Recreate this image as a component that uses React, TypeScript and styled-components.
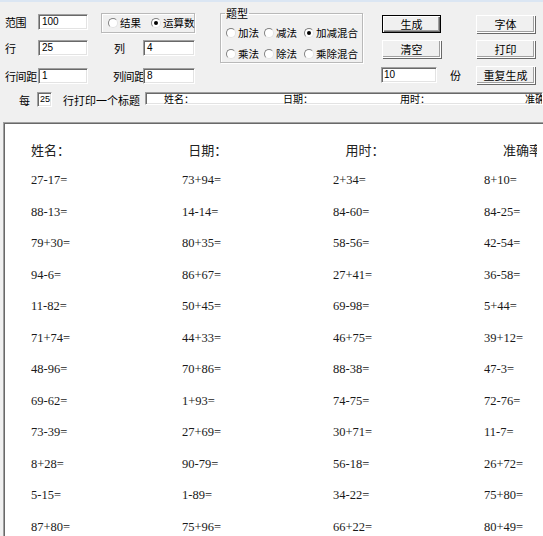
import React from 'react';
import styled, { createGlobalStyle } from 'styled-components';

const CJK = `"Noto Sans CJK SC", "Liberation Sans", sans-serif`;

const GlobalStyle = createGlobalStyle`
  html, body {
    margin: 0;
    padding: 0;
    background: #f0f0f0;
    overflow: hidden;
  }
  * {
    box-sizing: border-box;
  }
`;

const rows: string[][] = [
  ['27-17=', '73+94=', '2+34=', '8+10='],
  ['88-13=', '14-14=', '84-60=', '84-25='],
  ['79+30=', '80+35=', '58-56=', '42-54='],
  ['94-6=', '86+67=', '27+41=', '36-58='],
  ['11-82=', '50+45=', '69-98=', '5+44='],
  ['71+74=', '44+33=', '46+75=', '39+12='],
  ['48-96=', '70+86=', '88-38=', '47-3='],
  ['69-62=', '1+93=', '74-75=', '72-76='],
  ['73-39=', '27+69=', '30+71=', '11-7='],
  ['8+28=', '90-79=', '56-18=', '26+72='],
  ['5-15=', '1-89=', '34-22=', '75+80='],
  ['87+80=', '75+96=', '66+22=', '80+49='],
];

const headers = ['姓名：', '日期：', '用时：', '准确率'];

const Radio: React.FC<{ label: string; checked?: boolean; width?: number }> = ({ label, checked, width }) => (
  <RadioItem $width={width}>
    <RadioCircle $checked={checked} />
    <RadioLabel>{label}</RadioLabel>
  </RadioItem>
);

export default function App() {
  return (
    <Page>
      <GlobalStyle />
      <TopStripe />
      <Toolbar>
        <FieldGrid>
          <FieldLabel $col={1} $row={1}>范围</FieldLabel>
          <TextBox $col={2} $row={1} $offset={1}>100</TextBox>
          <ModeBox>
            <Radio label="结果" width={43} />
            <Radio label="运算数" checked />
          </ModeBox>

          <FieldLabel $col={1} $row={2}>行</FieldLabel>
          <TextBox $col={2} $row={2}>25</TextBox>
          <FieldLabel $col={5} $row={2} $indent={2}>列</FieldLabel>
          <TextBox $col={6} $row={2}>4</TextBox>

          <FieldLabel $col={1} $row={3}>行间距</FieldLabel>
          <TextBox $col={2} $row={3}>1</TextBox>
          <FieldLabel $col={5} $row={3}>列间距</FieldLabel>
          <TextBox $col={6} $row={3}>8</TextBox>
        </FieldGrid>

        <TypeGroup>
          <GroupLegend>题型</GroupLegend>
          <RadioRow>
            <Radio label="加法" />
            <Radio label="减法" />
            <Radio label="加减混合" checked />
          </RadioRow>
          <RadioRow>
            <Radio label="乘法" />
            <Radio label="除法" />
            <Radio label="乘除混合" />
          </RadioRow>
        </TypeGroup>

        <ButtonColumn $width={88} $left={19}>
          <Button $default>生成</Button>
          <Button>清空</Button>
          <CopiesRow>
            <CopiesBox>10</CopiesBox>
            <PlainLabel>份</PlainLabel>
          </CopiesRow>
        </ButtonColumn>

        <ButtonColumn $width={59} $left={6}>
          <Button>字体</Button>
          <Button>打印</Button>
          <Button $lastGap>重复生成</Button>
        </ButtonColumn>
      </Toolbar>

      <TitleRow>
        <PlainLabel>每</PlainLabel>
        <SmallBox>25</SmallBox>
        <PlainLabel $left={11}>行打印一个标题</PlainLabel>
        <TitleBar>
          <span>姓名：</span>
          <span>日期：</span>
          <span>用时：</span>
          <span>准确率：</span>
        </TitleBar>
      </TitleRow>

      <Sheet>
        <SheetClip>
          <HeaderRow>
            {headers.map((h) => (
              <HeaderCell key={h}>{h}</HeaderCell>
            ))}
          </HeaderRow>
          <QuestionGrid>
            {rows.map((r, i) =>
              r.map((q, j) => <QuestionCell key={`${i}-${j}`}>{q}</QuestionCell>)
            )}
          </QuestionGrid>
        </SheetClip>
      </Sheet>
    </Page>
  );
}

const Page = styled.div`
  width: 543px;
  height: 536px;
  overflow: hidden;
  background: #f0f0f0;
  font-family: ${CJK};
  color: #000;
`;

const TopStripe = styled.div`
  height: 2px;
  background: #dbe6f3;
`;

const Toolbar = styled.div`
  display: flex;
  align-items: flex-start;
  height: 90px;
  padding: 11px 0 0 4px;
`;

const FieldGrid = styled.div`
  display: grid;
  grid-template-columns: 34px 50px 13px 11px 31px 52px;
  grid-template-rows: 27px 28px 16px;
  align-items: start;
`;

const FieldLabel = styled.div<{ $col: number; $row: number; $indent?: number }>`
  grid-column: ${(p) => p.$col};
  grid-row: ${(p) => p.$row};
  margin-top: ${(p) => (p.$row === 1 ? 1 : 0)}px;
  padding-left: ${(p) => p.$indent ?? 1}px;
  font-size: 11px;
  line-height: 16px;
  letter-spacing: -0.4px;
  white-space: nowrap;
`;

const sunken = `
  background: #fff;
  border: 1px solid;
  border-color: #a0a0a0 #fff #fff #a0a0a0;
  box-shadow: inset 1px 1px 0 #696969, inset -1px -1px 0 #e3e3e3;
  font-family: "Liberation Sans", "DejaVu Sans", sans-serif;
  color: #000;
`;

const TextBox = styled.div<{ $col: number; $row: number; $offset?: number }>`
  ${sunken}
  grid-column: ${(p) => p.$col};
  grid-row: ${(p) => p.$row};
  margin-top: ${(p) => p.$offset ?? 0}px;
  height: 16px;
  padding-left: 3px;
  font-size: 10px;
  line-height: 13px;
`;

const etched = `
  border: 1px solid #b9b9b9;
  box-shadow: inset 1px 1px 0 #fff, 1px 1px 0 #fff;
`;

const ModeBox = styled.div`
  ${etched}
  grid-column: 4 / 7;
  grid-row: 1;
  height: 20px;
  display: flex;
  align-items: center;
  padding-left: 6px;
`;

const RadioItem = styled.div<{ $width?: number }>`
  display: inline-flex;
  align-items: center;
  gap: 2px;
  width: ${(p) => (p.$width ? `${p.$width}px` : 'auto')};
  flex-shrink: 0;
`;

const RadioCircle = styled.span<{ $checked?: boolean }>`
  position: relative;
  width: 10px;
  height: 10px;
  border-radius: 50%;
  background: #fff;
  border: 1px solid;
  border-color: #808080 #e3e3e3 #e3e3e3 #808080;
  flex-shrink: 0;

  &::after {
    content: '';
    display: ${(p) => (p.$checked ? 'block' : 'none')};
    position: absolute;
    left: 2px;
    top: 2px;
    width: 4px;
    height: 4px;
    border-radius: 50%;
    background: #000;
  }
`;

const RadioLabel = styled.span`
  font-size: 10.5px;
  line-height: 14px;
  white-space: nowrap;
`;

const TypeGroup = styled.fieldset`
  ${etched}
  margin: -6px 0 0 25px;
  width: 143px;
  height: 56px;
  padding: 0 0 1px 5px;
  min-width: 0;
`;

const GroupLegend = styled.legend`
  margin-left: -1px;
  padding: 0 1px;
  font-size: 11px;
  line-height: 12px;
`;

const RadioRow = styled.div`
  display: grid;
  grid-template-columns: 38px 40px auto;
  height: 14px;
  margin-top: 7px;
  align-items: center;
`;

const ButtonColumn = styled.div<{ $width: number; $left: number }>`
  display: flex;
  flex-direction: column;
  gap: 7px;
  width: ${(p) => p.$width}px;
  margin: 2px 0 0 ${(p) => p.$left}px;
`;

const Button = styled.div<{ $default?: boolean; $lastGap?: boolean }>`
  width: 59px;
  height: 18px;
  margin-top: ${(p) => (p.$lastGap ? 1 : 0)}px;
  display: flex;
  align-items: center;
  justify-content: center;
  background: #f0f0f0;
  border: 1px solid ${(p) => (p.$default ? '#000' : '#fff')};
  box-shadow: ${(p) =>
    p.$default
      ? 'inset 1px 1px 0 #fff, inset -1px -1px 0 #696969, inset -2px -2px 0 #a0a0a0'
      : 'inset -1px -1px 0 #a0a0a0, 1px 1px 0 #696969'};
  font-size: 11px;
  line-height: 14px;
`;

const CopiesRow = styled.div`
  display: flex;
  align-items: center;
  gap: 13px;
  margin: 2px 0 0 -1px;
`;

const CopiesBox = styled.div`
  ${sunken}
  width: 56px;
  height: 16px;
  padding-left: 2px;
  font-size: 10px;
  line-height: 13px;
`;

const PlainLabel = styled.span<{ $left?: number }>`
  margin-left: ${(p) => p.$left ?? 0}px;
  font-size: 11px;
  line-height: 16px;
  white-space: nowrap;
`;

const TitleRow = styled.div`
  display: flex;
  align-items: flex-start;
  height: 16px;
  padding-left: 19px;
`;

const SmallBox = styled.div`
  ${sunken}
  width: 15px;
  height: 15px;
  margin-left: 7px;
  padding-left: 2px;
  font-size: 9px;
  line-height: 12px;
`;

const TitleBar = styled.div`
  ${sunken}
  flex: 1;
  height: 13px;
  margin-left: 5px;
  display: grid;
  grid-template-columns: 119px 117px 125px auto;
  padding-left: 18px;
  overflow: hidden;
  font-family: ${CJK};
  font-size: 10px;
  line-height: 11px;
  white-space: nowrap;
`;

const Sheet = styled.div`
  margin: 14px 0 0 3px;
  height: 420px;
  background: #fff;
  border-top: 1px solid #a0a0a0;
  border-left: 1px solid #a0a0a0;
  box-shadow: inset 1px 1px 0 #696969;
`;

const SheetClip = styled.div`
  width: 533px;
  height: 100%;
  overflow: hidden;
`;

const HeaderRow = styled.div`
  display: grid;
  grid-template-columns: repeat(4, 157.3px);
  height: 30px;
  margin-top: 12px;
  padding-left: 27px;
  width: max-content;
`;

const HeaderCell = styled.div`
  font-family: ${CJK};
  font-size: 13px;
  line-height: 30px;
  color: #222;
  white-space: nowrap;
`;

const QuestionGrid = styled.div`
  display: grid;
  grid-template-columns: repeat(4, 151px);
  grid-auto-rows: 31.5px;
  padding-left: 27px;
  width: max-content;
`;

const QuestionCell = styled.div`
  font-family: "Liberation Serif", "DejaVu Serif", serif;
  font-size: 12.5px;
  line-height: 31.5px;
  color: #1a1a1a;
  white-space: nowrap;
`;
